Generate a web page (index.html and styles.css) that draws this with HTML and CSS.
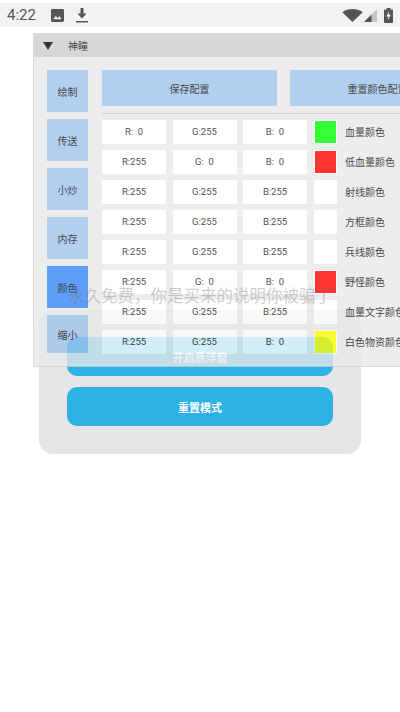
FILE: index.html
```html
<!DOCTYPE html>
<html lang="zh">
<head>
<meta charset="utf-8">
<title>神瞳</title>
<link rel="stylesheet" href="styles.css">
</head>
<body>
<div class="screen">
  <header class="status">
    <div class="status-left">
      <span class="time">4:22</span>
      <svg class="ic-image" viewBox="0 0 14 14"><path fill="#555" d="M1.5 0h11A1.5 1.5 0 0 1 14 1.500v11a1.500 1.500 0 0 1-1.500 1.500h-11A1.500 1.500 0 0 1 0 12.500v-11A1.500 1.500 0 0 1 1.500 0z"/><path fill="#f2f2f2" d="M2.500 11l2.700-3.600 2 2.500 1.800-2.400 2.500 3.500z"/></svg>
      <svg class="ic-down" viewBox="0 0 12 15"><path fill="#555" d="M4.500 0h3v5.500h3L6 10.500 1.500 5.500h3zM0 13h12v1.500H0z"/></svg>
    </div>
    <div class="status-right">
      <svg class="ic-wifi" viewBox="0 0 22 14"><path fill="#555" d="M0 3.500C3 1.200 6.800 0 11 0s8 1.200 11 3.500L11 14z"/></svg>
      <svg class="ic-signal" viewBox="0 0 13 13"><path fill="#c4c4c4" d="M13 0v13H0z"/><path fill="#555" d="M7.500 5.500V13H0z"/></svg>
      <svg class="ic-batt" viewBox="0 0 9 15"><path fill="#555" d="M2.500 0h4v1.500H8a1 1 0 0 1 1 1V14a1 1 0 0 1-1 1H1a1 1 0 0 1-1-1V2.500a1 1 0 0 1 1-1h1.500z"/><path fill="#f2f2f2" d="M5.200 3 2.300 8.500h2L3.700 12.500 6.800 6.800H4.700z"/></svg>
    </div>
  </header>

  <main class="card">
    <button class="action">开启悬浮窗</button>
    <button class="action">重置模式</button>
  </main>

  <section class="panel">
    <div class="panel-head">
      <span class="tri"></span>
      <span class="panel-title">神瞳</span>
    </div>
    <div class="panel-body">
      <nav class="side">
        <div class="side-btn">绘制</div>
        <div class="side-btn">传送</div>
        <div class="side-btn">小炒</div>
        <div class="side-btn">内存</div>
        <div class="side-btn active">颜色</div>
        <div class="side-btn short">缩小</div>
      </nav>
      <div class="content">
        <div class="top-btns">
          <div class="top-btn">保存配置</div>
          <div class="top-btn">重置颜色配置</div>
        </div>
        <div class="rows">
          <div class="cell">R:&nbsp;&nbsp;0</div><div class="cell">G:255</div><div class="cell">B:&nbsp;&nbsp;0</div><div class="swatch green"></div><div class="label">血量颜色</div>
          <div class="cell">R:255</div><div class="cell">G:&nbsp;&nbsp;0</div><div class="cell">B:&nbsp;&nbsp;0</div><div class="swatch red"></div><div class="label">低血量颜色</div>
          <div class="cell">R:255</div><div class="cell">G:255</div><div class="cell">B:255</div><div class="swatch"></div><div class="label">射线颜色</div>
          <div class="cell">R:255</div><div class="cell">G:255</div><div class="cell">B:255</div><div class="swatch"></div><div class="label">方框颜色</div>
          <div class="cell">R:255</div><div class="cell">G:255</div><div class="cell">B:255</div><div class="swatch"></div><div class="label">兵线颜色</div>
          <div class="cell">R:255</div><div class="cell">G:&nbsp;&nbsp;0</div><div class="cell">B:&nbsp;&nbsp;0</div><div class="swatch red"></div><div class="label">野怪颜色</div>
          <div class="cell">R:255</div><div class="cell">G:255</div><div class="cell">B:255</div><div class="swatch"></div><div class="label">血量文字颜色</div>
          <div class="cell">R:255</div><div class="cell">G:255</div><div class="cell">B:&nbsp;&nbsp;0</div><div class="swatch yellow"></div><div class="label">白色物资颜色</div>
        </div>
      </div>
    </div>
  </section>

  <div class="toast">永久免费，你是买来的说明你被骗了</div>
</div>
</body>
</html>
```

FILE: styles.css
```css
* { box-sizing: border-box; }
html, body { margin: 0; padding: 0; background: #fff; }
.screen {
  position: relative;
  width: 400px;
  height: 712px;
  overflow: hidden;
  background: #fff;
  font-family: Roboto, "Noto Sans CJK SC", sans-serif;
  color: #111;
}
.status {
  height: 24px;
  margin-top: 3px;
  background: #f2f2f2;
  display: flex;
  justify-content: space-between;
  align-items: center;
  padding: 0 7px;
}
.status-left, .status-right { display: flex; align-items: center; }
.time { font-size: 15px; color: #555; width: 44px; }
.ic-image { width: 13px; height: 13px; }
.ic-down { width: 12px; height: 15px; margin-left: 12px; }
.ic-wifi { width: 21px; height: 13px; }
.ic-signal { width: 13px; height: 13px; margin-left: 1px; }
.ic-batt { width: 9px; height: 15px; margin-left: 7px; }

.card {
  margin: 283px 0 0 39px;
  width: 322px;
  height: 144px;
  background: #e5e5e5;
  border-radius: 14px;
  padding: 27px 28px 28px;
  display: flex;
  flex-direction: column;
  gap: 11px;
}
.action {
  height: 39px;
  border: 0;
  border-radius: 10px;
  background: #2fb1e6;
  color: #fff;
  font-family: inherit;
  font-size: 11px;
  font-weight: 700;
  padding: 0;
}

.panel {
  position: absolute;
  left: 33px;
  top: 33px;
  width: 440px;
  height: 334px;
  background: #e9e9e9;
  border: 1px solid #d2d2d2;
  opacity: 0.79;
}
.panel-head {
  height: 23px;
  background: #cdcdcd;
  display: flex;
  align-items: center;
  padding-left: 9px;
}
.tri {
  width: 0;
  height: 0;
  border-left: 5px solid transparent;
  border-right: 5px solid transparent;
  border-top: 8px solid #000;
}
.panel-title { font-size: 10px; margin-left: 15px; }
.panel-body {
  display: flex;
  padding: 13px 0 0 13px;
  gap: 14px;
}
.side { width: 41px; display: flex; flex-direction: column; gap: 7px; }
.side-btn {
  height: 42px;
  background: #9ec3eb;
  display: flex;
  align-items: center;
  justify-content: center;
  font-size: 10px;
}
.side-btn.short { height: 38px; }
.side-btn.active { background: #3386f8; }
.content { flex: 1; }
.top-btns {
  display: flex;
  gap: 13px;
  height: 37px;
  padding-bottom: 1px;
}
.top-btn {
  width: 175px;
  height: 36px;
  background: #9ec3eb;
  display: flex;
  align-items: center;
  justify-content: center;
  font-size: 10px;
}
.rows {
  margin-top: 6px;
  padding-top: 6px;
  border-top: 1px solid #c4c4c4;
  display: grid;
  grid-template-columns: 64px 64px 64px 23px auto;
  grid-auto-rows: 23.500px;
  row-gap: 6.500px;
  column-gap: 6.500px;
  align-items: stretch;
}
.cell {
  background: #fff;
  display: flex;
  align-items: center;
  justify-content: center;
  font-size: 9.500px;
  color: #222;
}
.swatch { background: #fff; border: 1px solid #fff; }
.swatch.green { background: #0f0; }
.swatch.red { background: #f00; }
.swatch.yellow { background: #ff0; }
.label {
  display: flex;
  align-items: center;
  font-size: 10px;
  padding-left: 2px;
  white-space: nowrap;
}
.toast {
  position: absolute;
  left: 0;
  right: 0;
  top: 287px;
  text-align: center;
  font-size: 16.500px;
  line-height: 20px;
  color: rgba(110, 110, 110, 0.34);
  white-space: nowrap;
}
```
